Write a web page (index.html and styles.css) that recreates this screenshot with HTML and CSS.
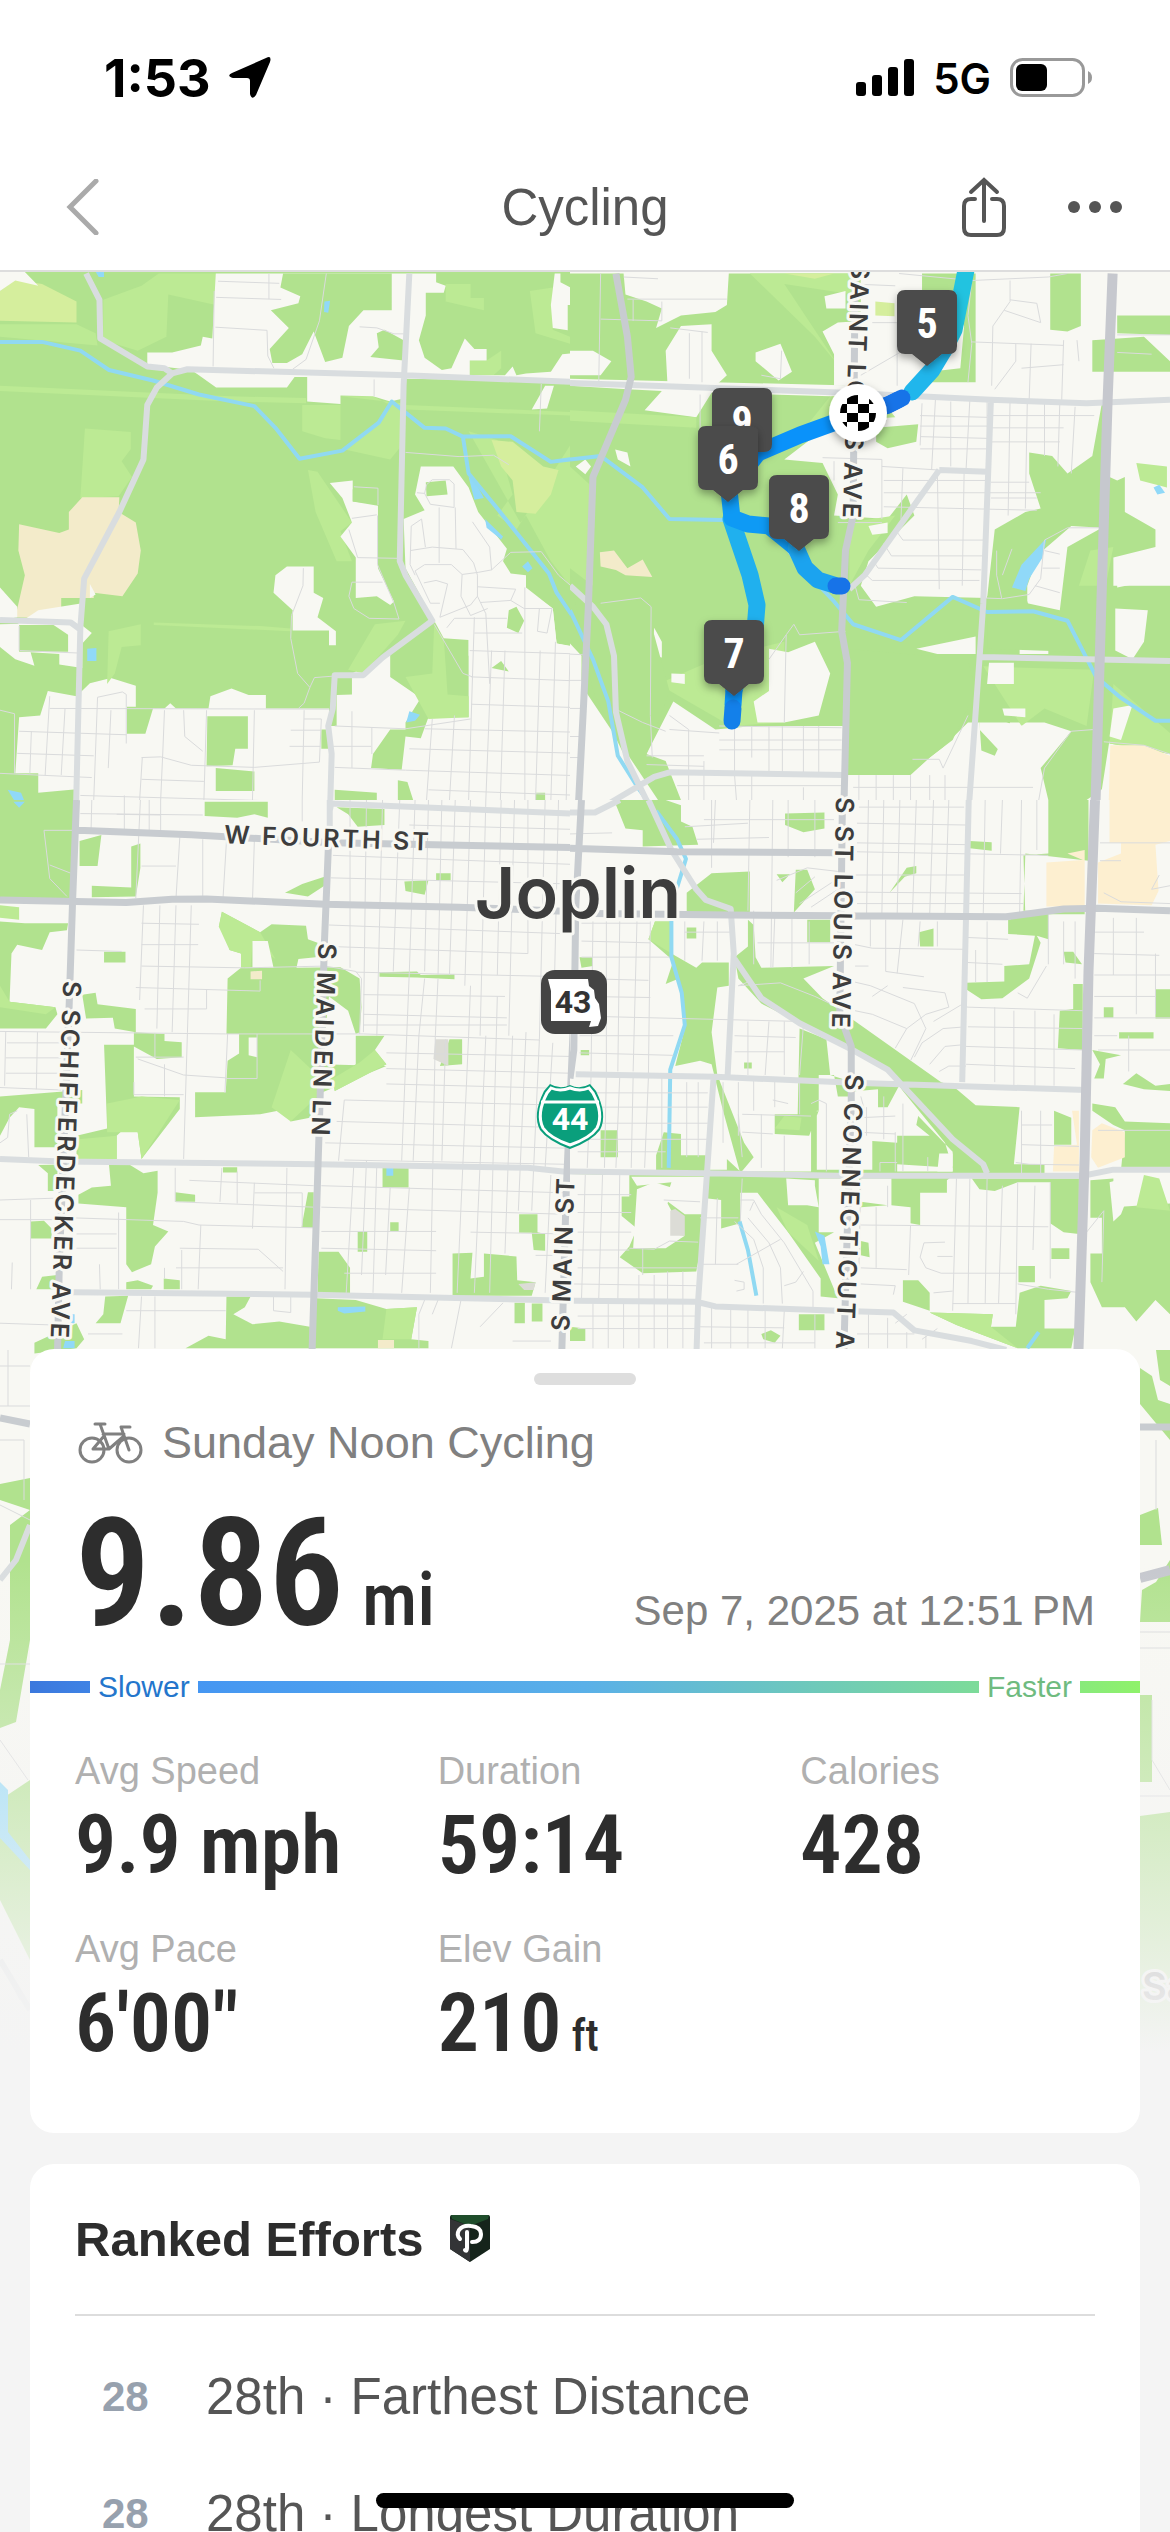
FILE: index.html
```html
<!DOCTYPE html>
<html lang="en">
<head>
    <meta charset="utf-8">
    <meta name="viewport" content="width=device-width, initial-scale=1">
    <title>Cycling</title>
    <link rel="stylesheet" href="styles.css">
</head>
<body>
    <div class="app">
        <header class="header">
            <div class="status-bar">
                <div class="status-left">
                    <span class="clock">1:53</span>
                    <svg class="icon-location" viewBox="0 0 42 42"><path d="M37 1Q43-2 41 5L27 38Q23 44 21 37V24Q21 21 18 21L4 21Q-3 19 3 16Z"/></svg>
                </div>
                <div class="status-right">
                    <svg class="icon-signal" viewBox="0 0 58 38">
                        <rect x="0" y="23" width="10" height="14" rx="3"/>
                        <rect x="16" y="16" width="10" height="21" rx="3"/>
                        <rect x="32" y="8" width="10" height="29" rx="3"/>
                        <rect x="48" y="0" width="10" height="37" rx="3"/>
                    </svg>
                    <span class="network">5G</span>
                    <svg class="icon-battery" viewBox="0 0 82 40">
                        <rect x="1.5" y="1.5" width="72" height="36" rx="11" fill="none" stroke="#999" stroke-width="3"/>
                        <rect x="6" y="6" width="31" height="27" rx="6"/>
                        <path d="M78 13Q82 15 82 19.500T78 26Z" fill="#999"/>
                    </svg>
                </div>
            </div>
            <nav class="nav-bar">
                <button class="nav-button nav-back" aria-label="Back">
                    <svg class="icon-back" viewBox="0 0 34 56"><path d="M30 2L4 28L30 54"/></svg>
                </button>
                <h1 class="nav-title">Cycling</h1>
                <div class="nav-actions">
                    <button class="nav-button" aria-label="Share">
                        <svg class="icon-share" viewBox="0 0 44 60"><path d="M13 22H9Q2 22 2 29V51Q2 58 9 58H35Q42 58 42 51V29Q42 22 35 22H30M22 44V3M9 15L22 3L35 15"/></svg>
                    </button>
                    <button class="nav-button" aria-label="More">
                        <svg class="icon-more" viewBox="0 0 54 12"><circle cx="6" cy="6" r="6"/><circle cx="27" cy="6" r="6"/><circle cx="48" cy="6" r="6"/></svg>
                    </button>
                </div>
            </nav>
        </header>

        <main class="activity">
            <svg class="map" viewBox="0 272 1170 1860" role="img" aria-label="Route map of Joplin">
                <defs>
                    <linearGradient id="fade" x1="0" y1="0" x2="0" y2="1">
                        <stop offset="0" stop-color="#f4f4f4" stop-opacity="0"/>
                        <stop offset="0.85" stop-color="#f4f4f4"/>
                    </linearGradient>
                    <filter id="drop" x="-30%" y="-30%" width="160%" height="170%">
                        <feDropShadow dx="0" dy="4" stdDeviation="4" flood-opacity="0.35"/>
                    </filter>
                    <clipPath id="flag"><circle cx="858" cy="413" r="18"/></clipPath>
                    <path id="pin" d="M8 0H52Q60 0 60 8V56Q60 64 52 64H45L30 76L15 64H8Q0 64 0 56V8Q0 0 8 0Z"/>
                </defs>
                <rect class="land" x="0" y="272" width="1170" height="1860"/>

                <!-- north west -->
                <svg x="0" y="270" width="570" height="530" viewBox="0 0 1490 1511" preserveAspectRatio="none">
                    <path class="park" d="M0 0H1490V1200L1510 1075L1455 1065L1445 965L1375 905H1225V1275H1120L1100 1335L1060 1330L1050 1425L970 1420L975 1380L1020 1310H1060V1290L1100 1220L1020 1160V1095L920 1150V1210L880 1212V1300L860 1300V1250H695V1212H650L605 1193L550 1215L545 1250H460L445 1235L430 1250H400L380 1322H332V1245H355V1185L290 1163L235 1178L200 1215L125 1200L105 1270L50 1275L40 1435H100V1490L200 1480V1511H0Z"/>
                    <path class="park-light" d="M270 85L370 45L415 10H564V100L440 70L435 190L360 230L270 200ZM0 155L200 155L250 180L255 215L0 190ZM222 452L342 462V510L318 545L345 590L310 645L210 650ZM805 570L830 575L920 720L890 745L920 830L880 830L825 690ZM790 385H890V485L850 480L790 460ZM890 360H975L1020 385L990 430L895 510L1020 540L1050 500V380ZM1225 460L1300 485L1340 640L1300 700L1350 740L1490 500V900L1440 830L1375 700L1360 720ZM284 1030L368 1010V1070L318 1075L300 1150L280 1180ZM910 1140L980 1010L1060 1000L1040 1040L950 1150ZM1135 1010L1160 1050L1170 1210L1225 1215V1275L1120 1280L1060 1160L1130 1150ZM0 330L400 350L600 360L800 365V380L600 375L0 345ZM1060 385L1280 395L1490 405V415L1060 398ZM402 1005L680 1015L760 1022V1030L402 1012ZM1165 40H1230V80H1265V115L1165 90ZM1228 258H1272L1310 230V280L1290 300H1228ZM1385 60L1445 50V170L1490 190V210L1400 180Z"/>
                    <path class="field" d="M0 60L40 28L110 40L200 90V150L0 145ZM1285 485L1340 490L1420 560L1460 570L1440 640L1400 695L1350 690L1340 600L1310 560Z"/>
                    <path class="sand" d="M50 725L155 750L180 740V690L215 648H312L310 690L355 720L368 800L360 865L320 930L245 920V935L160 935V965L105 992L40 990L65 870L48 800Z"/>
                    <path class="land" d="M0 0H60L100 45L40 30L0 60ZM564 10H1140V35L1165 45L1160 65H1113V130L1095 200L1110 250L1155 285L1180 280L1215 195L1240 225H1272V258H1228V300H1320L1340 275L1350 300L1375 295L1440 290L1470 240L1490 238V318L1060 310V365L1020 375L975 360L890 358V382L803 375V305H770L750 335H565L520 300L500 285L385 270V235H450L525 215L530 190L555 195ZM1450 10H1465V35L1510 60V100H1484V172L1445 165L1440 100ZM1390 398L1425 330H1448L1430 395ZM862 607L922 600V660L988 672V850L1030 945L1020 955L985 930L930 935V820L890 760L920 720L895 650ZM720 870L750 845H820V920L845 935L830 990L878 1030V1070H860V1028H765V970L715 920ZM1100 560H1185L1225 620L1250 690L1325 795L1315 830L1335 865L1375 870V910L1445 965L1455 1065L1525 1080V1100H1225V1055L1160 1050L1135 1000L1060 850L1055 710L1110 685L1085 640ZM0 905L45 960V990L0 1000ZM0 1010L205 1005L240 1035L215 1065V1135L155 1125V1095L80 1090L90 1128L40 1110L0 1075ZM100 970L215 950V1010H45ZM235 895L250 925L235 935Z"/>
                    <path class="park" d="M740 10H1024V115H950L912 160L895 250L850 262L820 175L790 240L750 265H712L705 225L755 165L708 115L780 95L785 75L733 50ZM985 180L1005 170L1055 200V258L968 248L990 220ZM1113 605L1165 600L1170 640L1115 645ZM922 625H988V668L922 660ZM50 1012H140L178 1040V1088H50ZM1330 970L1350 960L1370 1000L1355 1035L1325 1020ZM1285 1135L1310 1115L1330 1145ZM542 1272H648V1365H615L608 1412L540 1415ZM564 1420L665 1430V1485H564ZM875 1482L985 1490V1511H875ZM1040 1455L1065 1460L1080 1511H1040ZM1400 1490H1425V1511H1400ZM840 1310H860V1365H840Z"/>
                    <path class="water-fill" d="M250 5H272V20H258ZM848 90L863 88L858 122L847 120ZM1225 590L1240 600L1265 650L1240 655ZM1268 710L1315 760L1310 768L1272 735ZM1365 845L1380 830L1392 850L1380 862ZM228 1080L252 1078V1115H228ZM1070 1258L1098 1268L1085 1285L1062 1290ZM20 1482L55 1490L68 1525L50 1535Z"/>
                    <path class="creek" d="M0 205H110L210 230L285 285L400 315L520 355L665 388L720 450L783 538L895 515L990 435L1024 375L1110 450L1165 452L1210 475L1335 474L1440 547L1560 530M1210 475L1225 580L1300 680L1435 865L1455 920L1520 1025L1568 1150"/>
                    <path class="street" d="M853 10L835 145L800 255L765 283M570 32L730 38M703 10V83M565 78L735 84M563 163L698 172L700 245L716 280M560 60L557 275M940 162L985 165L1030 182H1055M978 312V360M1415 325L1410 460M1060 520L1200 532L1290 528L1330 555M925 618L988 622V670M920 708L985 698M912 740L935 820L1040 822M987 700V840L1030 950L1043 995L965 993L925 965L912 930L920 890H1000M793 850L792 900L762 985L760 1050L778 1150L810 1190L795 1235L780 1250M810 1190L822 1162L870 1158M1090 635L1110 637L1125 668L1187 677V610L1175 598H1130L1115 612L1110 637M1148 677V835M1190 677L1192 795M1102 710L1075 730L1072 840L1085 870M1102 710L1112 790M1072 800L1130 790L1210 797L1238 835L1248 870V930L1270 980L1280 1180M1085 858L1110 840L1180 840L1208 868L1205 930L1230 985M1108 892L1140 885L1170 895L1150 990L1230 955L1248 930M1208 868L1250 862L1285 855L1335 805L1415 803L1460 870L1530 935M1235 718L1280 790L1285 855M1248 903L1348 910L1335 942L1255 948M1230 985L1275 965M1168 1020L1188 993H1325M1335 942L1370 965L1443 965L1430 1035L1405 1030L1410 965M1372 905V1511M1085 858L1125 950L1150 950M130 1250L860 1252M50 1315L330 1325M45 1378L245 1385M0 1435L240 1447M130 1215L118 1440M82 1315L78 1435M170 1250L160 1440M290 1255L283 1420M330 1350V1210L320 1203L255 1218L245 1511M430 1255L425 1390M480 1255L483 1330L530 1372M540 1255L533 1511M370 1390L420 1388L500 1412L665 1418L835 1403L840 1280H795M665 1255L660 1511M795 1255L790 1511M372 1390L365 1511M210 1498L860 1518M370 1452L533 1458M325 1498V1511M425 1388L420 1511M875 1300L1060 1308L1230 1280M870 1358H970M875 1418L1060 1426M920 1258V1420M972 1305V1380M0 1255L38 1265V1435M52 1085L205 1092M50 1015V1085M760 1312H840M757 1358H838M1135 1010L1210 1150L1235 1160"/>
                    <path class="street" d="M1240 1035H1365M1228 1085L1525 1095M1232 1160L1522 1172M1232 1238L1522 1248M1110 1308L1520 1318M1070 1365L1520 1378M1060 1426L1520 1442M1120 1482L1520 1498M1130 1280L1115 1511M1188 1270L1175 1511M1240 990L1225 1511M1285 1085L1270 1511M1320 1085L1308 1511M1412 1085L1400 1511M1452 1060L1440 1511M1490 1095L1480 1511"/>
                    <path class="road" d="M225 10L260 85L262 195L385 275L430 280L450 295L490 283L1060 300L1568 322M450 295L410 335L385 385L375 540L312 690L220 880L210 1020L205 1250L198 1568M0 998L185 1005L210 1025M1070 10L1055 330L1045 830L1060 870L1130 1000L1000 1105L950 1155H875L870 1250L858 1300L867 1380L862 1568"/>
                </svg>

                <!-- north east -->
                <svg x="570" y="270" width="600" height="530" viewBox="0 0 1568 1511" preserveAspectRatio="none">
                    <path class="park" d="M0 10H140L145 70L200 90L240 110L225 165L290 130L380 120L410 100L415 10H760V330L0 310ZM0 330L150 340L240 345L195 400L330 420L370 350L680 360V440L560 540L660 550L700 640L690 700L830 710L880 640L900 700L780 830L760 900L800 960L900 930L1090 935L1110 740L1190 690L1230 680L1200 580L1200 520L1260 530L1300 580L1365 530L1390 380L1410 400V590L1430 600L1450 590V690L1530 740V790L1420 820V900H1568V1380L1410 1350V1340L1390 1480L1350 1511H1250L1230 1420L1310 1315L1240 1290L1150 1290L1110 1385L1075 1370L1070 1290H1040L975 1360L940 1390L890 1440H715V1300H480L380 1310L270 1230L200 1380L250 1400L290 1511H230L40 1200L0 1090ZM800 450L910 440L905 490L830 508L800 490ZM1255 10H1335V160L1300 175L1255 170ZM1430 130H1568V185L1430 180ZM1365 200L1500 190L1568 260V290H1365ZM920 10H1060V320L930 320L940 290L1020 280L1030 160L1000 100H920Z"/>
                    <path class="park-light" d="M470 10H740V70L560 40L700 270L640 190ZM0 400L330 420V450L0 430ZM680 360L800 350L850 420L700 430L570 510ZM0 560L60 620V900L0 850ZM730 720L850 700L780 800L730 900ZM230 1180L400 1100L560 1060V1290L420 1300ZM1480 550L1560 560V620L1490 600ZM1360 800L1420 790L1400 900L1330 900ZM1080 1130L1370 1140L1350 1300L1240 1250L1180 1300ZM1420 1180L1568 1320V1380L1410 1350Z"/>
                    <path class="land" d="M0 230H60L108 260L80 300H0ZM250 230L290 160L370 155V230L410 300L380 330H255ZM485 235L550 210L580 290L545 315L485 260ZM780 10H850V80H760V10ZM665 75L720 60V110H670ZM660 175L700 150L850 140V330H690V240ZM15 560L40 540L55 560L40 582ZM118 512L150 520L158 560L125 540ZM570 1090L640 1060L680 1150L650 1270L560 1290L490 1290L480 1230L520 1200V1080ZM220 1020L240 1060V1105L215 1100ZM265 1150L300 1152V1180L265 1175ZM780 730L830 720V750L790 755ZM905 1080L1060 1045V1095L960 1095ZM1095 1120H1160V1180H1090ZM1175 1030L1250 1060V1095H1175ZM1195 900L1225 810L1310 730L1390 735L1300 790L1280 970L1195 950ZM1425 965L1510 970L1500 1060L1470 1110L1425 1085ZM1430 870H1520V885L1430 905ZM1420 1250L1470 1240L1440 1340L1410 1330ZM1130 1250L1190 1250V1275L1135 1270ZM1070 1310L1130 1380H1185V1300L1140 1290H1070ZM0 1065L30 1100V1200H0ZM50 1380L95 1420L60 1511H40Z"/>
                    <path class="field" d="M798 90L848 95V132L798 130ZM560 10H690L640 25Z"/>
                    <path class="sand" d="M78 805L115 800L150 850L190 825L215 875L145 870L120 855L80 845Z"/>
                    <path class="cream" d="M1412 1355H1500L1568 1385V1511H1408Z"/>
                    <path class="park" d="M720 1080L1040 1110L1060 1200L1000 1340L940 1390L885 1440H715ZM1090 930L1180 900L1200 960L1280 980L1350 1090L1090 1080ZM0 870L60 950L210 940V1000L260 1200L200 1380H140L60 1200Z"/>
                    <path class="water-fill" d="M1245 765L1235 820L1200 880L1190 915L1155 905L1180 840ZM1525 620L1540 612L1555 635L1535 640Z"/>
                    <path class="creek" d="M0 540L80 530L190 620L260 710L520 715L590 830L690 945L740 1010L865 1055L1000 932L1090 975L1210 973L1300 1000L1375 1160L1440 1220L1530 1285H1568M0 970L60 1110L100 1230L125 1385L180 1480L240 1568"/>
                    <path class="street" d="M140 20L230 25M150 83H410M80 140L240 145V90M80 10L75 330M165 85V145M262 165L360 178M312 180V310M345 175V320M500 300L550 310L553 230M340 355V500M740 40L850 45M790 150H855V330M760 300L870 230M660 535L815 540V710M815 560L960 570M820 600H1090M820 635H1230M820 675L1220 685M690 545V600M870 565L865 710M960 570L965 910M1030 575L1025 900M700 720H815M850 740L870 770H1080M820 780L840 815H1080M790 825L805 850L1075 855M770 865L790 885H1070M745 900L755 940L880 948M920 380L915 500M955 370L945 570M995 375V560M1045 370L1035 570M915 415L1090 420M915 445H1090M915 475L1090 480M915 510H1090M1090 370V520M1150 370L1145 700M1195 380L1190 680M1240 380V530M1280 380L1275 560M1320 390L1310 580M1090 415H1370M1100 450H1290M1100 490H1280M1100 605H1200M1100 650H1220M860 10L1050 30L1040 130L1050 210L1040 320M1050 30L1250 20L1300 10M1150 30V90L1105 160L1102 330M1150 85L1220 95L1230 150L1135 115M1050 205L1290 215M1165 210V260L1110 340M1205 210L1200 370M1290 200L1285 370M1180 280L1290 270M1325 200L1330 260M1430 185H1568M1430 235L1520 240M1115 800V870L1128 935M1155 795L1130 870M1080 935L1130 937L1200 925L1230 880L1240 770L1300 735H1390M1240 800L1280 810M1235 850H1280M1215 900L1280 920M80 950L185 935L212 960L210 1270L215 1390M125 1255L190 1290L250 1315M520 1110L565 1040L585 1010L600 1040L720 1030M565 1040L560 1290M260 1310L390 1320M390 1300L710 1305M390 1340H710M390 1368H710M430 1300V1430M475 1300V1390M520 1300V1440M555 1300V1440M610 1300V1440M650 1300V1440M260 1270L310 1310V1560M350 1400V1511M430 1440L435 1511M475 1440V1511M200 1385H350M200 1410L350 1415M280 1470H710M610 1475V1540H700M755 1440V1511M800 1440V1511M845 1440V1511M890 1440V1511M940 1440V1511M980 1440V1511M740 1475H1210M895 1395H965L975 1420L1040 1270M1395 1345L1500 1355L1568 1380M1370 1310L1310 1315L1240 1420L1225 1511M0 1170H30M0 1095L35 1097M0 1250H30M0 1330H30M0 1390H30"/>
                    <path class="road" d="M0 322L160 328L720 350L1100 370L1350 380L1568 370M965 570L1090 575M1100 370L1080 950L1070 1110L1040 1568M730 910L770 870L965 570M1075 1103L1568 1115M0 900L60 960L95 1010L115 1100L120 1260L150 1400L225 1568M0 1548H60L220 1445L260 1432L715 1440"/>
                    <path class="highway" d="M120 10L150 190L160 305L145 370L60 590L48 960L35 1250L20 1568M745 10L740 700L720 800L710 1030L725 1120L715 1568"/>
                    <path class="highway-wide" d="M1418 10L1405 370L1390 900L1372 1568"/>
                </svg>

                <!-- south west -->
                <svg x="0" y="800" width="570" height="560" viewBox="0 0 1490 1568" preserveAspectRatio="none">
                    <path class="park" d="M0 0H205L190 275H0ZM535 5H700V50L665 40L620 50L535 45ZM880 20L1005 25V70L935 75L910 40ZM208 115L265 98L255 185H208ZM343 130L367 122V190L355 270L240 272V240L343 245ZM745 260L790 235L848 215V240L805 270ZM1057 228L1120 225L1110 265L1060 255ZM1140 205H1178V225H1140ZM0 340L65 345L178 345L175 365L130 370L110 420L45 405L30 430L25 565L145 580L150 600L120 640H0ZM572 355L580 313L680 370L710 348L800 352L805 390L830 400L825 440L780 445L775 470L890 468L940 500L945 580L940 650L930 655L910 590L860 550L850 650L840 740L1010 745L840 820L810 890L760 900L750 865L680 880L510 888V818H590L595 730L625 710V655H592L595 500L630 470V430L600 420L598 370ZM930 660H1005L980 700L1010 740L875 815L870 780L930 740ZM272 425H328V455H272ZM215 545L250 540L255 572L355 585V650L300 640L295 610L225 612ZM350 650L430 655V675L475 678V720L410 725L350 690ZM272 685H350V830L470 832V865L370 1005L360 930L330 915L305 940V1005H200V940L280 920ZM0 830L215 812V850L150 850V972H90V865L50 860L25 890L0 940ZM1175 670H1208V740L1150 745ZM992 482L1090 480L1100 490L1188 488V502L1090 497L992 495ZM285 1022H340L375 1045L412 1038V1100L400 1190L440 1208L405 1250L395 1300L345 1322L330 1300V1140L205 1130V1105L240 1085L290 1080ZM100 1022L205 1020L150 1040V1095H125V1045ZM458 1098L510 1105V1125H458ZM583 1028H620V1043H583ZM1000 1030H1068V1085H1000ZM805 1098H820V1198H788ZM80 1180L115 1178L135 1200V1228H80ZM935 1208H960V1265H935ZM1020 1182H1042V1207H1020ZM1357 1160H1405V1210L1425 1215V1262L1395 1260L1390 1212H1357ZM1183 1270L1235 1268L1230 1340L1265 1335V1270L1350 1278L1352 1345L1400 1350L1390 1388H1183ZM833 1265H885L915 1310V1382H830ZM428 1340L470 1345V1370H428ZM330 1350L360 1345L400 1360L395 1370H330ZM95 1370L110 1335L150 1330V1370ZM275 1390L335 1388L315 1465H250L270 1440ZM592 1390H655L640 1420L610 1440L660 1468L730 1460L810 1475V1535H485L545 1500L590 1510ZM825 1395L930 1400L1010 1425L1090 1420L1075 1510L1120 1515V1535H820ZM1345 1408H1372V1465H1345ZM1390 1410H1418V1460H1390ZM90 1520L200 1465L220 1510L200 1535L90 1550Z"/>
                    <path class="park-light" d="M0 295L50 300V335L0 330ZM0 520L25 565L145 580L120 600L0 580ZM572 355L580 313L680 370L720 445L660 400L655 470H630V430L600 420ZM280 850L370 830L470 840L370 1005L360 930H280ZM760 700L820 760L840 820L760 900L710 860ZM870 780L940 735L980 700L1010 740L875 815ZM205 950L305 940V1005H205ZM1010 1425L1090 1420L1075 1510H1000Z"/>
                    <path class="land" d="M660 395H700L715 470H660ZM650 665H672V720L650 715Z"/>
                    <path class="building" d="M1138 670H1172V745L1133 725ZM1355 1355L1400 1350L1395 1372H1370Z"/>
                    <path class="sand" d="M655 480L685 478V502H655ZM988 1512H1030V1535H988Z"/>
                    <path class="water-fill" d="M35 5H65L50 22ZM1010 1030H1028V1052H1010ZM883 1420L955 1418V1432L900 1438L883 1430ZM170 1515H195V1535H165ZM180 1440H195V1465H180Z"/>
                    <path class="street" d="M210 38L530 42M305 40L420 42M240 0L238 85M325 0V85M367 0L355 275M390 0V85M420 0V85M115 85H190M115 85L130 220L175 270M130 182L185 205M470 105L460 275M530 110V275M592 115L583 275M665 110L660 285M370 185H460M790 0V60M370 345L520 348M370 405H518M200 420L318 424M370 465L640 470L850 465L930 480L945 500L940 655M355 525L680 535V505M378 585H540V530M375 295L365 560M418 295L410 640M460 295L450 650M500 295L490 650M0 648L590 655L950 655L1410 672M15 648L12 800M98 650L95 810M18 680H160M15 722H160M15 765H160M0 805L160 812M405 655V720M355 720H480M350 790V825H480M490 650L480 1005M595 655L588 820M592 780H672V655M70 880L75 1000M45 870L25 880L20 945L0 960M360 725L480 770L590 778M430 740V830M458 1030V1125M495 1065L820 1080M460 1125L820 1140M665 1072L660 1200M665 1100H790V1195M580 1030L575 1125M620 1040V1130M750 1030L745 1370M0 1120L140 1115M80 1120V1370M0 1175H140M190 1170L480 1180L520 1190L820 1198M200 1215H305M310 1155V1370M200 1255H305M470 1255L675 1258L740 1320M460 1310H740M525 1190L518 1370M430 1310V1340M475 1260V1370M260 1300L262 1370M32 1295L30 1370M0 1465L140 1470M370 1390L362 1535M405 1390V1535M330 1430H590M320 1495H230M715 1390V1430L760 1435V1390M1110 1400L1095 1440V1535M1145 1400L1130 1440M1205 1400L1180 1535M1315 1408L1255 1475M1340 1515H1440"/>
                    <path class="street" d="M870 155L1490 180M865 218L1490 235M860 350L1490 375M860 410L1380 430M930 482L1490 495M950 545L1320 550M950 600L1325 610M950 630H1325M1010 708L1490 718M1010 752L1490 765M1010 795L1490 808M900 840L1490 855M880 900L1490 918M850 960L1490 975M900 1008L1480 1020M840 1080L1480 1100M840 1140L1480 1160M1230 1210L1480 1215M840 1208H1140M840 1255L1140 1262M900 1325H1140M1400 1275H1480M1070 70L1490 82M915 0V470M958 0L950 650M1000 0L985 660M1045 0L1028 480M1070 480L1050 1010M1085 0L1070 480M1120 0L1110 480M1155 0L1145 490M1190 0L1175 490M1230 0L1215 520M1270 0L1255 660M1310 0L1300 490M1345 0L1330 660M1380 0V430M1425 0L1410 670M1460 0L1450 480M1110 500L1095 660L1080 1010M1145 500L1138 660L1125 1380M1165 670L1155 1010M1230 520L1225 660L1195 1380M1270 660L1240 1380M1300 550L1280 1380M1340 660L1320 1270M1375 650L1355 1150M1410 670L1390 1150M1445 680L1425 1030M900 840L885 1010M925 1020L905 1380M958 1010L945 1330M985 1020L975 1380M1020 1085L1008 1330M1070 1085L1050 1380M1440 1050L1425 1380"/>
                    <path class="road" d="M868 0L862 30M865 10L1490 38M0 1005L160 1012L830 1020L1380 1030L1490 1042M190 1378L820 1385L1490 1402M862 0V90"/>
                    <path class="highway" d="M200 0L190 275L180 600L155 1300L150 1568M205 85L500 97L870 120L1490 133M860 90L848 400L835 900L815 1568M1518 0L1500 600L1480 1100L1468 1568"/>
                    <path class="highway" d="M0 280L330 287L450 278L540 277L850 292L1200 300L1490 312"/>
                </svg>

                <!-- south east -->
                <svg x="570" y="800" width="600" height="560" viewBox="0 0 1568 1568" preserveAspectRatio="none">
                    <path class="park" d="M115 0H250L290 15V60L320 75L335 125L190 130V85L145 80ZM562 38L665 35V80L610 90L562 70ZM305 260L370 205L470 200V315H305ZM540 208H575L555 230ZM590 195H620L640 250L585 315ZM835 260L880 190L905 185V205L875 215ZM1045 115L1102 118V142L1045 135ZM1250 0H1355V170L1190 150L1185 310H1345V320H1250V390L1220 380L1230 400L1200 500L1130 555L1075 558L1035 530V512L1135 508V465L1200 460L1215 380L1145 375V335L1190 325L1185 155L1250 150ZM465 335L480 350L485 440L500 470L690 465L610 500L660 555L970 790L1000 800L1060 855L1175 860L1160 1020H1240V1045H1000V985L910 885L905 910L940 940H855V1040H1015L985 1065L985 1100H915V1190L890 1185V1140L840 1135V1060L760 1060V1125L830 1135L760 1140L755 1060H650V1210L690 1210L640 1240L700 1395L655 1390V1340L570 1210L490 1100H445V1185L395 1200V1120L355 1115V1055H160L175 1080L265 1070L250 1120L300 1160H345V1235L330 1320L190 1325L130 1280L155 1250L175 1200L135 1165V1110H155V1050H0L225 1045V995L245 930L290 935V995H355V1035H410V1005L445 1040H630V880L650 870H645V1035H790V955L855 960V1020L1000 1030L980 960L870 815L860 800L830 860H805V810L700 820L720 790L735 830H700L690 770H650V870L625 940L535 935V880L595 880L600 640L670 670L680 770L740 790H870L740 700L500 570L440 500L430 440L465 410ZM222 340H265V430L330 470L345 455H415V520L385 525L370 650L385 770L455 960L480 1000L445 1045L400 870L370 740L340 730L275 745L300 640L285 500L250 515L270 450L205 390ZM305 357H330V388H305ZM620 335H680V398H620ZM912 370L950 360V410H915ZM1290 425L1315 425L1338 460L1295 455ZM1315 515H1340V700L1275 695L1280 590L1315 585ZM1395 580H1420V610H1395ZM1530 530H1568V612H1530ZM1435 650H1525V668H1435ZM80 925H125V1000H80ZM455 735H475V752H455ZM1365 700L1440 715L1400 725L1395 780H1370L1385 740ZM1445 795L1480 765L1530 800L1568 795V815L1500 810ZM1265 870L1310 890V965H1265ZM1365 850L1425 860L1450 900L1568 905V1030L1440 1035L1450 925L1420 910L1365 870ZM1050 1060H1330V1215L1290 1210L1255 1185V1070L1170 1070L1110 1095L1070 1090ZM1360 1065L1420 1060V1140L1568 1130V1440L1530 1400L1480 1460L1450 1420L1390 1420L1360 1350V1270H1390V1170H1360ZM1258 1255H1305V1285H1258ZM870 1345L910 1345L940 1380V1430L870 1405ZM940 1435L1105 1440L1100 1475H1165L1175 1380L1230 1360L1310 1375L1300 1395L1240 1400V1480L1320 1480L1310 1535H1170L1010 1470ZM1172 1305H1215V1350H1172ZM598 1440H665V1485H598ZM500 1495L525 1485L550 1500L535 1520L505 1510ZM0 1475L40 1480V1515H0ZM760 1235L780 1240L783 1280L760 1275ZM25 440H60V465L30 470ZM28 700H50V715H28Z"/>
                    <path class="park-light" d="M222 340H265V430L205 390ZM560 885L605 890L600 925L535 920ZM1500 1050L1540 1060L1568 1150L1480 1140ZM540 1140L620 1190L650 1290L570 1210ZM940 1435L1105 1440L1100 1475L1170 1535L1010 1470Z"/>
                    <path class="land" d="M175 1090L220 1070L265 1085L255 1130L265 1150V1215L300 1220L250 1255H165ZM640 1080L650 1140L620 1135H570L565 1060L640 1065ZM965 990H1000V1040H960ZM1410 1070L1480 1050L1440 1160L1420 1180ZM1450 1420L1480 1510L1530 1410V1480L1500 1568H1440Z"/>
                    <path class="building" d="M262 1150L275 1145L300 1165V1220H262Z"/>
                    <path class="cream" d="M1410 0H1568V115L1530 125L1538 255L1520 295L1380 290V175L1440 150V120H1410ZM1245 175L1340 168L1300 150L1345 140V298H1245ZM1265 970L1325 965L1312 870H1330V1040H1262ZM1365 925L1390 905L1450 930V1000L1380 1030L1362 1000Z"/>
                    <path class="water-fill" d="M640 1208L665 1220L678 1300H660L655 1250Z"/>
                    <path class="creek" d="M225 30L280 110L303 165L280 245L265 330V440L292 540L300 630L262 755L258 1030M443 1180L465 1260L487 1388M1225 1490L1195 1535"/>
                    <path class="street" d="M0 95L110 92M30 345H210M30 395L210 400M30 440H260M30 500L205 505M30 550L210 553M30 605L600 620M25 660H270M25 708L270 715M60 340L55 760M95 340V765M130 340L125 760M175 340L165 760M210 340L205 765M300 340V450M350 340L345 450M385 340V450M300 370H420M430 660L590 665M430 705H560M465 620V770M520 620L510 770M560 620V770M610 630L600 770M240 765V1030M205 775L195 1030M165 775L160 1030M130 775L120 1030M95 775L90 1030M55 775L45 1030M20 820H360M20 860H360M20 905H360M20 950H360M20 985H250M305 790V1000M335 790V1000M370 0V190M380 0L375 120M470 0L465 310M530 0L525 470M570 0V160M640 0V160M300 75L465 65M330 110L520 105M350 55H690M540 225L620 190L700 200M590 260L640 215M600 290L700 220M630 300L700 250M480 310V460M535 330L530 470M580 330V470M625 340V460M490 400H690M440 520L550 512L640 550L700 580M440 520L465 510M450 880L630 885M450 930L530 935M440 880L450 1000M500 880V1030M535 780V860M540 780L640 785M560 940V1040M600 780V880M630 850L650 840L670 850V1040M400 790V960M440 790V940M480 780V870M530 840L570 850"/>
                    <path class="street" d="M755 20H1030M750 65L1035 70M750 120L1035 125M750 145L1250 155M745 210H1030M745 258L1180 262M750 290H1185M780 0L775 320M820 0L815 320M862 0L855 320M905 0L895 320M950 0L940 320M990 0L980 320M1085 0L1080 320M1130 0L1125 150M1180 0L1175 320M1220 0V140M745 405L790 415L1030 418M745 465H780M785 335V410M825 335V480L925 495M870 335L855 485M915 340L910 410M960 340V410M745 510L785 520L900 570L930 640L890 730M830 520L790 550M870 525L980 540L990 580L930 600L880 640L850 695M745 590L790 600L880 640M1040 580L1020 575L950 620M1035 635L975 640L920 680L900 720M1030 685L980 690L940 740M1035 745L990 745L965 760M1040 580L1340 590M1040 635L1340 640M1035 690L1340 700M1035 740L1320 752M1060 420V510M1090 340V510M1110 580V790M1160 590V800M1215 590V800M1265 600V800M1040 385L1145 390M1040 455L1130 460M1290 340V460M1320 340V500M1250 320V460M1170 540L1195 555L1245 465M1370 370H1500M1370 430L1540 435M1370 490H1568M1370 550H1530M1420 330V490M1480 330V600M1530 430V600M1370 610H1568M1370 660H1430M1380 700H1568M1460 660V760M1180 870V1045M1230 870V1045M1180 910H1260M1180 965L1330 970M1165 1015L1200 1020L1330 1022M1385 120H1568M1385 170H1440M1380 925H1568M1395 260L1440 285L1568 290M1540 210L1520 250L1568 240M775 860V940M750 890L850 885M820 830V950M760 830L770 870M870 850V1040M750 930L850 935M810 1040V1015H855M935 1000V1040M850 930V1040"/>
                    <path class="street" d="M760 1060L755 1310M800 1140V1310M830 1080V1140M890 1190L885 1330M760 1190L1250 1195M925 1240L980 1238M925 1240L915 1280L930 1310L970 1325H1165M1010 1060L1000 1430M1045 1060L1040 1410M1090 1060L1085 1410M1130 1080L1120 1410M1170 1070L1165 1440M1215 1080L1210 1260M1255 1070V1340M1000 1410H1165M760 1310L880 1315M760 1355L850 1360L845 1385M950 1380L1000 1375M960 1278H1000M450 1060L445 1180M445 1120L480 1120L500 1160L560 1240L635 1375V1420M480 1125L470 1150M465 1170L520 1240L550 1310L555 1410M430 1180L480 1230L505 1310V1410M435 1300L550 1230M430 1345L455 1350V1370L435 1375M560 1360L590 1350L610 1320M340 1170H440M340 1300H440M385 1115L380 1300M20 1105H160M20 1155H160M20 1210H160M20 1260H155M20 1310H340M0 1355L330 1360M40 1050L30 1400M85 1050L75 1400M130 1050L125 1400M20 1445H340M20 1480H330M60 1410V1535M100 1410V1535M140 1410V1535M180 1330V1535M220 1330V1535M255 1320V1535M295 1320V1535M155 1255L220 1258L260 1235L335 1238M190 1255V1330M245 1120L340 1125M370 1415V1535M420 1420V1535M465 1425V1535M510 1430V1535M560 1430L555 1535M640 1440V1535M340 1475L560 1478M350 1520H640M750 1495H900M780 1440V1535M830 1450V1535M880 1490V1535M930 1500V1535M850 1465L880 1440M920 1510L960 1480M1170 1355L1250 1370L1340 1380M1350 1210L1395 1150L1390 1350"/>
                    <path class="road" d="M0 35H65L130 0M205 0L265 140L330 250L355 280L420 305L428 430L412 770M430 445L500 555L600 625L730 695L830 755L1000 950L1080 1020L1090 1045M15 768L380 775L740 792L1350 812M375 780L358 1045L335 1400L330 1568M0 1040L350 1045L700 1052L1340 1052L1420 1035H1568M10 1402L330 1405L380 1418L700 1430L845 1435L900 1485L1050 1515L1140 1540M1042 0L1025 790"/>
                    <path class="highway" d="M30 0L15 300L10 700L0 780M0 135L280 145L700 148M60 318L420 322L1140 327L1290 305L1380 303L1568 310M712 0L705 600L735 690V850L722 1300L715 1568"/>
                    <path class="highway-wide" d="M1372 0L1355 480L1345 1000L1328 1568"/>
                </svg>

                <!-- strips beside the card -->
                <path class="park" d="M0 1484L30 1478V1510L0 1500ZM10 1525L30 1510V1640L16 1722L0 1728V1690L10 1640ZM0 1800L30 1780V1960L0 1900ZM1140 1368L1152 1376L1158 1400L1170 1404V1440L1140 1404ZM1156 1350H1170V1386L1160 1380ZM1140 1515L1158 1508L1162 1545H1140ZM1142 1590L1156 1582L1170 1560V1622H1140ZM1140 1695H1152V1782H1140ZM1140 1816L1170 1812V2090H1140Z"/>
                <path class="water-fill" d="M0 1782L8 1790V1832L30 1860V1870L0 1838Z"/>
                <path class="street" d="M0 1366H30M0 1406H30M0 1440H24V1500M0 1505L30 1520M8 1350V1406M0 1664H30M0 1740L28 1780M0 1960L20 2000M1140 1632H1170M1140 1648H1170M1152 1700V1760L1170 1790M1140 1796H1170M1156 1440V1510"/>
                <path class="road" d="M30 1525L16 1560L0 1580M0 1960L30 2010"/>
                <path class="highway" d="M0 1418L30 1424M1140 1427H1170"/>
                <path class="highway-wide" d="M1140 1578L1170 1570"/>
                <text class="area-label" x="1142" y="2000">Sarcoxie</text>
                <rect x="0" y="1560" width="1170" height="580" fill="url(#fade)"/>

                <text class="road-label" transform="translate(856 392) rotate(92)">SAINT LOUIS AVE</text>
                <text class="road-label" transform="translate(328 838) rotate(2)">W FOURTH ST</text>
                <text class="road-label" transform="translate(324 1041) rotate(92)">S MAIDEN LN</text>
                <text class="road-label" transform="translate(66 1161) rotate(92)">S SCHIFFERDECKER AVE</text>
                <text class="road-label" transform="translate(563 1253) rotate(-88)">S MAIN ST</text>
                <text class="road-label" transform="translate(843 914) rotate(91)">S ST LOUIS AVE</text>
                <text class="road-label" transform="translate(849 1232) rotate(92)">S CONNECTICUT AVE</text>
                <text class="city-label" x="578" y="918">Joplin</text>

                <!-- highway shields -->
                <rect x="541" y="970" width="66" height="64" rx="14" fill="#444"/>
                <path d="M548 979H588L589 986L594 990L595 998L599 1004L601 1018L598 1026L589 1027L591 1021L588 1021H551V991Z" fill="#fff"/>
                <text class="shield-label" x="573" y="1013">43</text>
                <path d="M550 1084Q560 1090 570 1085Q580 1090 590 1084L596 1091Q608 1115 600 1130Q592 1141 570 1149Q548 1141 540 1130Q532 1115 544 1091Z" fill="#0a9f7c"/>
                <path d="M551 1088Q560 1092 570 1088Q580 1092 589 1088L593 1093Q604 1114 597 1128Q590 1138 570 1145Q550 1138 543 1128Q536 1114 547 1093Z" fill="#0a9f7c" stroke="#fff" stroke-width="3"/>
                <path d="M541 1102H599" stroke="#fff" stroke-width="3"/>
                <text class="shield-label light" x="570" y="1130">44</text>

                <!-- ride -->
                <g class="route">
                    <path stroke="#22c3e0" d="M967 265L954 330L944 350"/>
                    <path stroke="#1773e8" d="M858 414L888 405L898 400"/>
                    <path stroke="#20b6ec" d="M944 350L932 370L912 392"/>
                    <path stroke="#1773e8" d="M888 405L902 398"/>
                    <path stroke="#0a92fa" d="M858 414L800 435L758 453L729 490"/>
                    <path stroke="#20b0ee" d="M731 519L750 575L757 605L755 630L734 690"/>
                    <path stroke="#0e9af5" d="M729 490L732 518L748 524L769 526L796 548"/>
                    <path stroke="#1ba3ef" d="M796 548L805 568L818 580L834 585"/>
                    <path stroke="#1773e8" d="M836 586H842"/>
                    <path stroke="#0a92fa" d="M734 690L733 705"/>
                    <path stroke="#1380ea" d="M733 708L732 721"/>
                </g>
                <g class="pins">
                    <use href="#pin" x="897" y="290"/><text x="927" y="338">5</text>
                    <use href="#pin" x="712" y="388"/><text x="742" y="436">9</text>
                    <use href="#pin" x="698" y="426"/><text x="728" y="474">6</text>
                    <use href="#pin" x="769" y="475"/><text x="799" y="523">8</text>
                    <use href="#pin" x="704" y="620"/><text x="734" y="668">7</text>
                </g>
                <circle cx="858" cy="413" r="29" fill="#fff" filter="url(#drop)"/>
                <path clip-path="url(#flag)" d="M847 395H858V404H847ZM869 395H880V404H869ZM836 404H847V413H836ZM858 404H869V413H858ZM847 413H858V422H847ZM869 413H880V422H869ZM836 422H847V431H836ZM858 422H869V431H858Z"/>
            </svg>

            <div class="sheet">
                <section class="card summary">
                    <div class="handle"></div>
                    <div class="workout-name">
                        <svg class="icon-bike" viewBox="0 0 66 44"><circle cx="14" cy="29" r="12"/><circle cx="51" cy="29" r="12"/><path d="M17 3H27M22 3L31 28M25 13H46M15 28H31L46 15M15 28L26 15M51 29L43 6H52"/></svg>
                        <span>Sunday Noon Cycling</span>
                    </div>
                    <div class="distance-row">
                        <p class="distance">9.86<small>mi</small></p>
                        <time class="date" datetime="2025-09-07T12:51">Sep 7, 2025 at 12:51&#8239;PM</time>
                    </div>
                    <div class="pace-scale">
                        <span class="slower">Slower</span>
                        <span class="faster">Faster</span>
                    </div>
                    <dl class="stats">
                        <div><dt>Avg Speed</dt><dd>9.9 mph</dd></div>
                        <div><dt>Duration</dt><dd>59:14</dd></div>
                        <div><dt>Calories</dt><dd>428</dd></div>
                        <div><dt>Avg Pace</dt><dd>6'00"</dd></div>
                        <div><dt>Elev Gain</dt><dd>210<small>ft</small></dd></div>
                    </dl>
                </section>

                <section class="card efforts">
                    <h2 class="efforts-title">
                        Ranked Efforts
                        <svg class="icon-badge" viewBox="0 0 44 50">
                            <path d="M2 3Q2 1 4 1H40Q42 1 42 3V35L22 48L2 35Z" fill="#15241b"/>
                            <path d="M2 5L22 12V48L2 35Z" fill="#333436"/>
                            <path d="M3 1H41L40 5L22 12L4 5Z" fill="#1f4d2b"/>
                            <path d="M19 18V34Q19 38 17 36M12 25Q8 21 11 16Q15 11 23 12Q33 13 33 20Q33 28 24 28" fill="none" stroke="#fff" stroke-width="4" stroke-linecap="round"/>
                        </svg>
                    </h2>
                    <ul class="effort-list">
                        <li><span class="rank">28</span>28th · Farthest Distance</li>
                        <li><span class="rank">28</span>28th · Longest Duration</li>
                    </ul>
                </section>
            </div>
        </main>
        <div class="home-indicator"></div>
    </div>
</body>
</html>
```
FILE: styles.css
```css
* {
    box-sizing: border-box;
    margin: 0;
    padding: 0;
}

body {
    font-family: "Liberation Sans", Arial, sans-serif;
    background-color: #f4f4f4;
    color: #2d2d2d;
}

.app {
    display: flex;
    flex-direction: column;
    position: relative;
    height: 100vh;
    overflow: hidden;
}

/* header */
.header {
    background-color: #fff;
    border-bottom: 2px solid #ddd;
}

.status-bar {
    display: flex;
    justify-content: space-between;
    align-items: center;
    height: 142px;
    padding: 14px 78px 0 104px;
    color: #000;
    font-family: Inter, sans-serif;
}

.status-left,
.status-right {
    display: flex;
    align-items: center;
}

.status-left {
    gap: 18px;
}

.status-right {
    gap: 19px;
}

.clock {
    font-size: 52px;
    font-weight: 700;
}

.network {
    font-size: 42px;
    font-weight: 600;
}

.icon-location {
    width: 42px;
}

.icon-signal {
    width: 58px;
}

.icon-battery {
    width: 82px;
}

.nav-bar {
    display: grid;
    grid-template-columns: 1fr auto 1fr;
    align-items: center;
    height: 128px;
    padding: 2px 48px 0;
}

.nav-button {
    display: flex;
    border: none;
    background: none;
    cursor: pointer;
}

.nav-back {
    padding-left: 18px;
}

.nav-title {
    color: #555;
    font-size: 51px;
    font-weight: 400;
}

.nav-actions {
    display: flex;
    justify-content: flex-end;
    align-items: center;
    gap: 62px;
}

.icon-back,
.icon-share {
    fill: none;
    stroke: #555;
    stroke-width: 4;
    stroke-linecap: round;
}

.icon-back {
    width: 34px;
    stroke: #aaa;
    stroke-width: 5;
}

.icon-share {
    width: 44px;
}

.icon-more {
    width: 54px;
    fill: #555;
}

/* map */
.activity {
    display: grid;
    flex: 1;
    min-height: 0;
}

.map,
.sheet {
    grid-area: 1 / 1;
}

.map {
    width: 100%;
}

.map path {
    vector-effect: non-scaling-stroke;
}

.land { fill: #f8f8f3; }
.park { fill: #b1e28e; }
.park-light { fill: #bcea94; }
.field { fill: #d5ee9d; }
.sand { fill: #f3ebca; }
.cream { fill: #fdefd0; }
.building { fill: #dcdcd6; }
.water-fill { fill: #90d9f8; }

.creek,
.street,
.road,
.highway,
.highway-wide {
    fill: none;
    stroke-linejoin: round;
}

.creek {
    stroke: #90d9f2;
    stroke-width: 4;
}

.street {
    stroke: #dadbdc;
    stroke-width: 1;
}

.road {
    stroke: #d9dddf;
    stroke-width: 6;
}

.highway {
    stroke: #c8ccd0;
    stroke-width: 7;
}

.highway-wide {
    stroke: #c6c8ce;
    stroke-width: 10;
}

.road-label,
.city-label,
.area-label {
    font-family: Inter, sans-serif;
    font-weight: 600;
    fill: #3d3d3d;
    stroke: #f8f8f3;
    stroke-width: 6;
    stroke-linejoin: round;
    paint-order: stroke;
}

.road-label {
    font-size: 25px;
    letter-spacing: 3px;
    text-anchor: middle;
    dominant-baseline: central;
}

.city-label {
    font-size: 70px;
    text-anchor: middle;
}

.area-label {
    font-size: 38px;
    fill: #777;
}

.shield-label {
    font-family: Roboto, sans-serif;
    font-size: 32px;
    font-weight: 700;
    fill: #333;
    text-anchor: middle;
}

.shield-label.light {
    fill: #fff;
}

.route {
    fill: none;
    stroke-width: 17;
    stroke-linecap: round;
    stroke-linejoin: round;
}

.pins use {
    fill: #4b4b4b;
    filter: url(#drop);
}

.pins text {
    font-family: "Roboto Condensed", Roboto, sans-serif;
    font-size: 42px;
    font-weight: 700;
    fill: #fff;
    text-anchor: middle;
}

/* sheet */
.sheet {
    display: flex;
    flex-direction: column;
    gap: 31px;
    padding: 1077px 30px 0;
    z-index: 1;
}

.card {
    flex-shrink: 0;
    padding: 0 45px;
    border-radius: 24px;
    background-color: #fff;
}

.summary {
    padding-top: 24px;
    padding-bottom: 58px;
}

.handle {
    width: 102px;
    height: 12px;
    margin: 0 auto 32px;
    border-radius: 6px;
    background-color: #dedede;
}

.workout-name {
    display: flex;
    align-items: center;
    gap: 18px;
    color: #808080;
    font-size: 45px;
    line-height: 52px;
}

.icon-bike {
    width: 66px;
    margin-left: 3px;
    fill: none;
    stroke: #808080;
    stroke-width: 3;
    stroke-linecap: round;
    stroke-linejoin: round;
}

.distance-row {
    display: flex;
    justify-content: space-between;
    align-items: baseline;
    margin-top: 12px;
}

.distance,
.stats dd {
    font-family: "Roboto Condensed", Roboto, sans-serif;
    font-weight: 600;
}

.distance {
    font-size: 150px;
    line-height: 186px;
}

.distance small,
.stats small {
    font-weight: 500;
    line-height: 1;
}

.distance small {
    margin-left: 18px;
    font-size: 74px;
}

.date {
    color: #808080;
    font-size: 42px;
}

.pace-scale {
    display: flex;
    justify-content: space-between;
    margin: 0 -45px;
    padding: 0 60px;
    background: linear-gradient(90deg, #3b78dd, #4596f2 15%, #5ab0e8 50%, #7ddc98 86%, #8ff26a) center / 100% 12px no-repeat;
    font-size: 30px;
    line-height: 40px;
}

.pace-scale span {
    padding: 0 8px;
    background-color: #fff;
}

.slower {
    color: #2476cc;
}

.faster {
    color: #6fbb80;
}

.stats {
    display: grid;
    grid-template-columns: repeat(3, minmax(0, 1fr));
    gap: 30px 68px;
    margin-top: 42px;
}

.stats dt {
    color: #b0b0b0;
    font-size: 38px;
    line-height: 44px;
}

.stats dd {
    font-size: 82px;
    line-height: 104px;
    white-space: nowrap;
}

.stats small {
    margin-left: 10px;
    font-size: 44px;
}

/* efforts */
.efforts-title {
    display: flex;
    align-items: center;
    gap: 24px;
    height: 152px;
    border-bottom: 2px solid #ddd;
    font-size: 49px;
}

.icon-badge {
    width: 44px;
}

.effort-list {
    padding-top: 22px;
    list-style: none;
}

.effort-list li {
    display: flex;
    align-items: center;
    height: 117px;
    padding-left: 27px;
    color: #555;
    font-size: 51px;
}

.rank {
    width: 104px;
    color: #97a1ae;
    font-size: 42px;
    font-weight: 700;
}

.home-indicator {
    position: absolute;
    bottom: 24px;
    left: 50%;
    z-index: 2;
    width: 418px;
    height: 15px;
    margin-left: -209px;
    border-radius: 8px;
    background-color: #000;
}
```
